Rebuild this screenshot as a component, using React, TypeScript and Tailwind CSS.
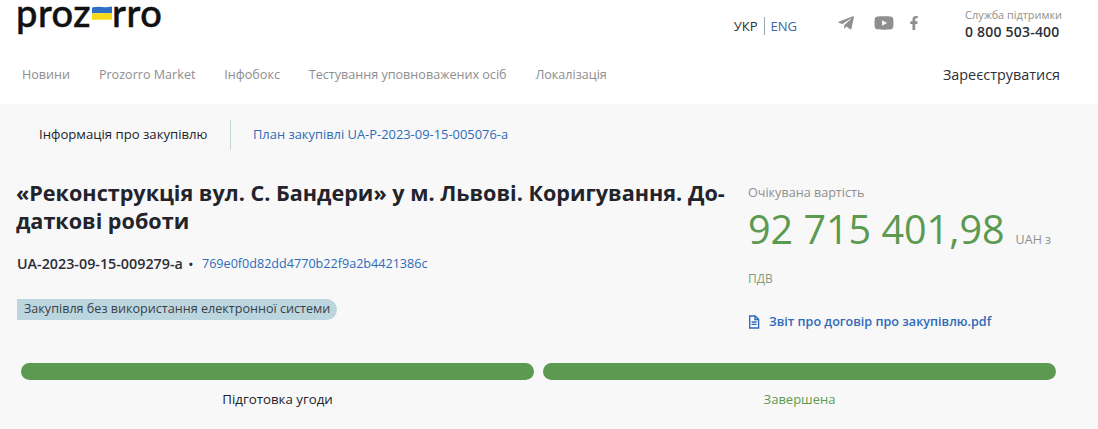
import React from "react";
import { FaTelegramPlane, FaYoutube, FaFacebookF } from "react-icons/fa";

const nav = ["Новини", "Prozorro Market", "Інфобокс", "Тестування уповноважених осіб", "Локалізація"];

function Flag() {
  return (
    <svg width="20" height="15" viewBox="0 0 20 15" className="mx-[0.5px] mt-[2px]">
      <path d="M0 1.5 Q5 0.5 10 1 T20 0.5 V7 Q15 7.5 10 7.2 T0 7.5Z" fill="#2f6fc4" />
      <path d="M0 7.5 Q5 7 10 7.2 T20 7 V13.5 Q15 14 10 13.7 T0 14Z" fill="#f7d917" />
    </svg>
  );
}

export default function App() {
  return (
    <div className="w-[1098px] h-[429px] overflow-hidden bg-[#f8f8f8] font-['Open_Sans',sans-serif] text-[#22232b]">
      <header className="h-[104px] bg-white flex flex-col">
        <div className="flex h-[57px]">
          <div className="ml-[16px] flex items-center h-[24px] font-['Lato',sans-serif] font-medium text-[38px] leading-[24px] text-[#111] tracking-[0.5px] [-webkit-text-stroke:0.5px_#111]">
            <span>proz</span>
            <Flag />
            <span>rro</span>
          </div>
          <div className="ml-auto flex items-start">
            <div className="mt-[17px] flex items-center text-[13px] leading-[18px]">
              <span className="text-[#2b2f38] pr-[6px]">УКР</span>
              <span className="border-l border-[#9aa6ad] pl-[6px] text-[#3c67a8]">ENG</span>
            </div>
            <div className="ml-[40px] mt-[13px] flex items-center text-[#8f8f8f]">
              <FaTelegramPlane size={18} />
              <FaYoutube size={20} className="ml-[19px]" />
              <FaFacebookF size={14} className="ml-[13px]" />
            </div>
            <div className="ml-[44px] mr-[36px] mt-[7px] flex flex-col">
              <span className="text-[10.9px] leading-[15px] text-[#8f8f8f]">Служба підтримки</span>
              <span className="text-[14px] leading-[18px] mt-[1px] font-semibold tracking-[0.2px] text-[#2b2f38]">0 800 503-400</span>
            </div>
          </div>
        </div>
        <nav className="flex items-center h-[36px] pl-[22px] pr-[38px] text-[12.6px] text-[#8e8e8e]">
          <div className="flex gap-[28.8px]">
            {nav.map((n) => (
              <span key={n}>{n}</span>
            ))}
          </div>
          <span className="ml-auto text-[14.4px] text-[#2b2f38]">Зареєструватися</span>
        </nav>
      </header>

      <div className="flex items-center h-[30px] mt-[16px]">
        <span className="pl-[39px] pr-[23px] text-[13.15px] font-medium text-[#22232b]">Інформація про закупівлю</span>
        <span className="h-[30px] border-l border-[#c5d5d8]" />
        <span className="pl-[21.5px] text-[12.9px] text-[#2f6bb8]">План закупівлі UA-P-2023-09-15-005076-a</span>
      </div>

      <main className="flex mt-[28px] pl-[17px]">
        <div className="w-[731px]">
          <h1 className="w-[720px] text-[21.6px] leading-[28px] font-bold text-[#22232b] mt-[1px] -ml-[1px]">
            «Реконструкція вул. С. Бандери» у м. Львові. Коригування. До-<br />даткові роботи
          </h1>
          <div className="flex items-center mt-[19px] h-[20px]">
            <span className="text-[14.3px] font-semibold text-[#2b2f38]">UA-2023-09-15-009279-a</span>
            <span className="ml-[6px] mr-[9px] text-[11px] font-bold text-[#2b2f38]">•</span>
            <span className="text-[12.6px] text-[#2f6bb8]">769e0f0d82dd4770b22f9a2b4421386c</span>
          </div>
          <div className="mt-[25px] inline-flex h-[21px] items-center rounded-r-full bg-[#bcd6e0] pl-[7px] pr-[7px] text-[12.6px] text-[#3a3f47]">
            Закупівля без використання електронної системи
          </div>
        </div>
        <div className="flex-1">
          <div className="text-[12.6px] leading-[17px] text-[#8f8f8f] mt-[6px]">Очікувана вартість</div>
          <div className="flex items-baseline h-[52px] mt-[2px]">
            <span className="text-[39.5px] leading-[52px] text-[#5b9a50]">92 715 401,98</span>
            <span className="ml-[11px] text-[12.5px] text-[#8f8f8f]">UAH з</span>
          </div>
          <div className="mt-[15px] text-[12px] leading-[17px] text-[#7f9c78]">ПДВ</div>
          <div className="mt-[26px] flex items-center text-[12.6px] font-semibold text-[#2f6bb8]">
            <svg width="12" height="14" viewBox="0 0 12 14" fill="none" stroke="#2f6bb8" strokeWidth="1.4" className="mr-[9px]">
              <path d="M1.7 1h5.5L10.6 4.4V13H1.7Z" />
              <path d="M3.6 7h5M3.6 9.4h5" />
              <path d="M7 1v3.6h3.6" />
            </svg>
            Звіт про договір про закупівлю.pdf
          </div>
        </div>
      </main>

      <div className="flex gap-[9px] pl-[21px] pr-[42px] mt-[31px]">
        <div className="flex-1 flex flex-col items-center">
          <div className="w-full h-[17px] rounded-full bg-[#5b9a50]" />
          <span className="mt-[10px] text-[13.3px] font-medium text-[#22232b]">Підготовка угоди</span>
        </div>
        <div className="flex-1 flex flex-col items-center">
          <div className="w-full h-[17px] rounded-full bg-[#5b9a50]" />
          <span className="mt-[10px] text-[13px] font-medium text-[#5b9a50]">Завершена</span>
        </div>
      </div>
    </div>
  );
}
